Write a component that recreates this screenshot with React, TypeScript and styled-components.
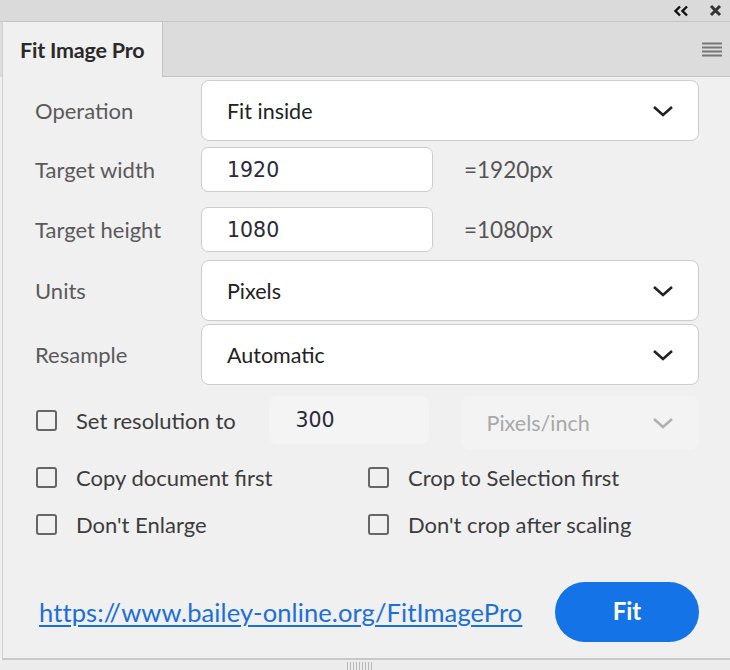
import styled, { createGlobalStyle } from "styled-components";

const GlobalStyle = createGlobalStyle`
  html, body {
    margin: 0;
    padding: 0;
    background: #f0f0f0;
  }
  * {
    box-sizing: border-box;
  }
`;

const Frame = styled.div`
  width: 730px;
  height: 670px;
  display: flex;
  flex-direction: column;
  overflow: hidden;
  font-family: Lato, "Open Sans", sans-serif;
  background: #f0f0f0;
`;

const TitleBar = styled.div`
  height: 22px;
  background: #dadada;
  border-bottom: 1px solid #c6c6c6;
  display: flex;
  align-items: center;
  justify-content: flex-end;
  gap: 20px;
  padding-right: 8px;
`;

const Tab = styled.div`
  width: 161px;
  background: #f0f0f0;
  border-left: 1px solid #cfcfcf;
  border-right: 1px solid #c4c4c4;
  display: flex;
  align-items: center;
  padding-left: 17px;
  font-size: 21.5px;
  font-weight: 700;
  color: #2a2a2a;
  letter-spacing: -0.2px;
`;

const TabBar = styled.div`
  height: 55px;
  display: flex;
  background: #dcdcdc;
  padding-left: 2px;
`;

const TabFill = styled.div`
  flex: 1;
  border-bottom: 1px solid #c4c4c4;
  display: flex;
  align-items: center;
  justify-content: flex-end;
  padding-right: 8px;
`;

const Panel = styled.div`
  flex: 1;
  margin-left: 2px;
  border-left: 1px solid #d2d2d2;
  border-bottom: 2px solid #c8c8c8;
  padding: 3px 31px 0 32px;
  display: flex;
  flex-direction: column;
`;

const Row = styled.div<{ $top: number; $h: number }>`
  display: grid;
  grid-template-columns: 166px 1fr;
  align-items: center;
  margin-top: ${(p) => p.$top}px;
  height: ${(p) => p.$h}px;
`;

const Label = styled.span`
  font-size: 22px;
  color: #5a5a5a;
`;

const Select = styled.div<{ $disabled?: boolean }>`
  height: 100%;
  background: ${(p) => (p.$disabled ? "#f3f3f3" : "#fff")};
  border: 1px solid ${(p) => (p.$disabled ? "#f3f3f3" : "#cdcdcd")};
  border-radius: 8px;
  display: flex;
  align-items: center;
  justify-content: space-between;
  padding: 0 24px 0 25px;
  font-size: 21.5px;
  color: ${(p) => (p.$disabled ? "#a8a8a8" : "#222")};
`;

const InputLine = styled.div`
  display: flex;
  align-items: center;
  height: 100%;
`;

const Input = styled.div<{ $w: number; $soft?: boolean }>`
  width: ${(p) => p.$w}px;
  height: 100%;
  background: ${(p) => (p.$soft ? "#f4f4f4" : "#fff")};
  border: 1px solid ${(p) => (p.$soft ? "#f4f4f4" : "#cdcdcd")};
  border-radius: 7px;
  display: flex;
  align-items: center;
  padding-left: 25px;
  font-family: "DejaVu Sans", sans-serif;
  font-size: 20.5px;
  color: #2a2a3a;
`;

const Equals = styled.span`
  margin-left: 31px;
  font-size: 22.5px;
  color: #555;
`;

const ResRow = styled.div`
  display: flex;
  align-items: center;
  margin-top: 11px;
  height: 54px;
`;

const ResCheck = styled.div`
  width: 236px;
  padding-left: 1px;
  margin-top: -5px;
`;

const ResUnit = styled.div`
  width: 240px;
  height: 100%;
  margin-left: 32px;
`;

const CheckGrid = styled.div<{ $top: number }>`
  display: grid;
  grid-template-columns: 332px 1fr;
  margin-top: ${(p) => p.$top}px;
  height: 30px;
  align-items: center;
  padding-left: 1px;
`;

const Check = styled.label`
  display: flex;
  align-items: center;
  gap: 19px;
  font-size: 22px;
  color: #3c3c3c;
`;

const Box = styled.span`
  width: 21px;
  height: 21px;
  border: 2px solid #666;
  border-radius: 3px;
  flex-shrink: 0;
`;

const Footer = styled.div`
  display: flex;
  align-items: center;
  justify-content: space-between;
  margin-top: 43px;
  height: 60px;
  padding-left: 4px;
`;

const Link = styled.a`
  font-size: 25.5px;
  color: #1a6fd8;
  text-decoration: underline;
  text-underline-offset: 3px;
  letter-spacing: 0.1px;
`;

const FitButton = styled.button`
  width: 144px;
  height: 60px;
  border: none;
  border-radius: 30px;
  background: #1473e6;
  color: #fff;
  font-family: Lato, sans-serif;
  font-size: 24px;
  font-weight: 700;
  padding-bottom: 4px;
`;

const Grip = styled.div`
  height: 10px;
  display: flex;
  justify-content: center;
  background: #ececec;
`;

const GripLines = styled.div`
  width: 26px;
  height: 8px;
  margin-top: 2px;
  margin-left: -10px;
  background: repeating-linear-gradient(90deg, #b8b8b8 0 1px, transparent 1px 3px);
`;

function Collapse() {
  return (
    <svg width="16" height="12" viewBox="0 0 16 12">
      <path d="M7 1.5 L2.5 6 L7 10.5 M14 1.5 L9.5 6 L14 10.5" fill="none" stroke="#111" strokeWidth="2.4" />
    </svg>
  );
}

function Close() {
  return (
    <svg width="13" height="13" viewBox="0 0 13 13">
      <path d="M2 2 L11 11 M11 2 L2 11" fill="none" stroke="#333" strokeWidth="3" />
    </svg>
  );
}

function Chevron({ muted }: { muted?: boolean }) {
  return (
    <svg width="22" height="14" viewBox="0 0 22 14">
      <path
        d="M2 3 L11 11 L20 3"
        fill="none"
        stroke={muted ? "#b0b0b0" : "#222"}
        strokeWidth="2.6"
      />
    </svg>
  );
}

function Hamburger() {
  return (
    <svg width="20" height="16" viewBox="0 0 20 16">
      {[1.5, 5.5, 9.5, 13.5].map((y) => (
        <rect key={y} x="0" y={y} width="20" height="2" fill="#777" />
      ))}
    </svg>
  );
}

function Checkbox({ label }: { label: string }) {
  return (
    <Check>
      <Box />
      {label}
    </Check>
  );
}

function App() {
  return (
    <Frame>
      <GlobalStyle />
      <TitleBar>
        <Collapse />
        <Close />
      </TitleBar>
      <TabBar>
        <Tab>Fit Image Pro</Tab>
        <TabFill>
          <Hamburger />
        </TabFill>
      </TabBar>
      <Panel>
        <Row $top={0} $h={61}>
          <Label>Operation</Label>
          <Select>
            Fit inside
            <Chevron />
          </Select>
        </Row>
        <Row $top={6} $h={45}>
          <Label>Target width</Label>
          <InputLine>
            <Input $w={232}>1920</Input>
            <Equals>=1920px</Equals>
          </InputLine>
        </Row>
        <Row $top={15} $h={45}>
          <Label>Target height</Label>
          <InputLine>
            <Input $w={232}>1080</Input>
            <Equals>=1080px</Equals>
          </InputLine>
        </Row>
        <Row $top={8} $h={61}>
          <Label>Units</Label>
          <Select>
            Pixels
            <Chevron />
          </Select>
        </Row>
        <Row $top={3} $h={61}>
          <Label>Resample</Label>
          <Select>
            Automatic
            <Chevron />
          </Select>
        </Row>
        <ResRow>
          <ResCheck>
            <Checkbox label="Set resolution to" />
          </ResCheck>
          <Input $w={160} $soft style={{ height: 48, alignSelf: "flex-start" }}>
            300
          </Input>
          <ResUnit>
            <Select $disabled>
              Pixels/inch
              <Chevron muted />
            </Select>
          </ResUnit>
        </ResRow>
        <CheckGrid $top={12}>
          <Checkbox label="Copy document first" />
          <Checkbox label="Crop to Selection first" />
        </CheckGrid>
        <CheckGrid $top={17}>
          <Checkbox label="Don't Enlarge" />
          <Checkbox label="Don't crop after scaling" />
        </CheckGrid>
        <Footer>
          <Link href="#">https://www.bailey-online.org/FitImagePro</Link>
          <FitButton>Fit</FitButton>
        </Footer>
      </Panel>
      <Grip>
        <GripLines />
      </Grip>
    </Frame>
  );
}

export default App;
